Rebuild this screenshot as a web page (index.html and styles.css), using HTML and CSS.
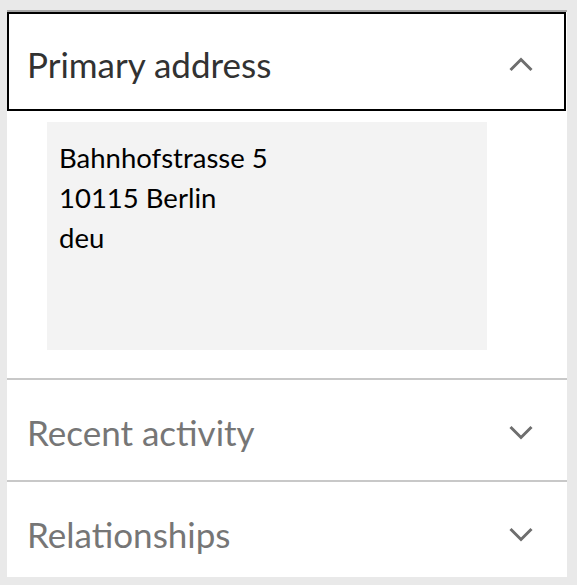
FILE: index.html
```html
<!DOCTYPE html>
<html lang="en">
<head>
<meta charset="utf-8">
<title>Accordion</title>
<link rel="stylesheet" href="styles.css">
</head>
<body>
<div class="panel">
  <div class="section section-open">
    <div class="section-head head-focus">
      <span class="section-title title-active">Primary address</span>
      <svg class="chevron" width="24" height="15" viewBox="0 0 24 15"><polyline points="1.5,13 12,2.5 22.5,13" fill="none" stroke="#6e6e6e" stroke-width="3"/></svg>
    </div>
    <div class="section-body">
      <div class="address">
        <div>Bahnhofstrasse 5</div>
        <div>10115 Berlin</div>
        <div>deu</div>
      </div>
    </div>
  </div>
  <div class="section">
    <div class="section-head">
      <span class="section-title">Recent activity</span>
      <svg class="chevron" width="24" height="15" viewBox="0 0 24 15"><polyline points="1.5,2 12,12.5 22.5,2" fill="none" stroke="#6e6e6e" stroke-width="3"/></svg>
    </div>
  </div>
  <div class="section">
    <div class="section-head">
      <span class="section-title">Relationships</span>
      <svg class="chevron" width="24" height="15" viewBox="0 0 24 15"><polyline points="1.5,2 12,12.5 22.5,2" fill="none" stroke="#6e6e6e" stroke-width="3"/></svg>
    </div>
  </div>
</div>
</body>
</html>
```
FILE: styles.css
```css
html, body {
  margin: 0;
  padding: 0;
  background: #e9e9e9;
}
body {
  padding: 10px 10px 8px 7px;
  font-family: Lato, "Open Sans", sans-serif;
}
.panel {
  width: 560px;
  height: 567px;
  box-sizing: border-box;
  overflow: hidden;
  background: #ffffff;
  border-top: 2px solid #a6a6a6;
}
.section + .section {
  border-top: 2px solid #c8c8c8;
}
.section-head {
  height: 100px;
  box-sizing: border-box;
  display: flex;
  align-items: center;
  justify-content: space-between;
  padding: 4px 34px 0 20px;
}
.head-focus {
  height: 99px;
  margin-right: 1px;
  border: 2px solid #000000;
  padding: 5px 31px 0 18px;
}
.section-title {
  font-size: 35px;
  font-weight: 400;
  color: #767676;
  line-height: 40px;
}
.title-active {
  color: #323232;
}
.chevron {
  display: block;
}
.section-body {
  padding: 11px 0 28px 40px;
}
.address {
  width: 440px;
  height: 228px;
  box-sizing: border-box;
  background: #f3f3f3;
  padding: 16px 12px;
  font-size: 27.5px;
  line-height: 40px;
  color: #000000;
}
```
